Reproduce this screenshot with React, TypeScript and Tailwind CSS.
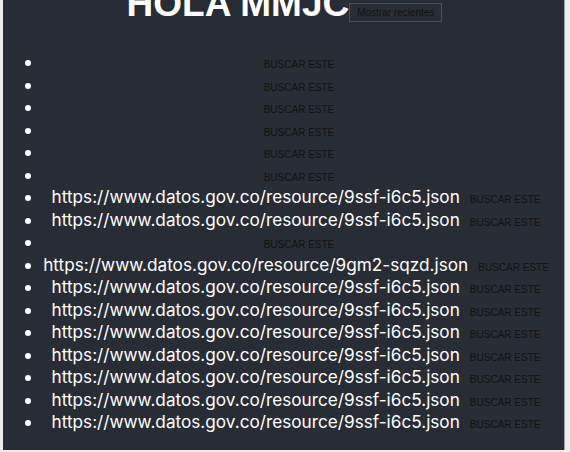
import React from "react";

const SSF = "https://www.datos.gov.co/resource/9ssf-i6c5.json";
const GM2 = "https://www.datos.gov.co/resource/9gm2-sqzd.json";

const recursos: string[] = [
  "", "", "", "", "", "",
  SSF, SSF,
  "",
  GM2,
  SSF, SSF, SSF, SSF, SSF, SSF, SSF,
];

const App: React.FC = () => {
  return (
    <div className="w-[570px] h-[452px] overflow-hidden bg-[#ededed] pl-[3px] pr-[5px] pb-[2px]">
      <div className="h-full flex flex-col bg-[#282c34] border-r border-[#a3a3a3] text-white">
        {/* Header */}
        <div className="flow-root h-[51px] shrink-0 text-center pl-[2px]">
          <h1 className="-mt-[15px] font-['Liberation_Sans',Arial,sans-serif] text-[37px] leading-[37px] font-bold">
            HOLA MMJC
            <button className="inline-block align-baseline h-[19px] border border-[#6e4c1a] px-[7px] text-[10px] leading-[17px] font-normal text-[#111]">
              Mostrar recientes
            </button>
          </h1>
        </div>

        {/* Lista de recursos */}
        <ul className="list-disc pl-[40px] pr-[15px] mb-[18px] font-['Inter',sans-serif] text-[17.2px] leading-[22.5px] text-center">
          {recursos.map((url, i) => (
            <li key={i} className="whitespace-nowrap">
              {url && <span>{url}</span>}
              <button
                className={`font-['Liberation_Sans',Arial,sans-serif] text-[10px] leading-none text-[#111] align-baseline ${url ? "ml-[10px]" : "ml-[6px]"}`}
              >
                BUSCAR ESTE
              </button>
            </li>
          ))}
        </ul>
      </div>
    </div>
  );
};

export default App;
